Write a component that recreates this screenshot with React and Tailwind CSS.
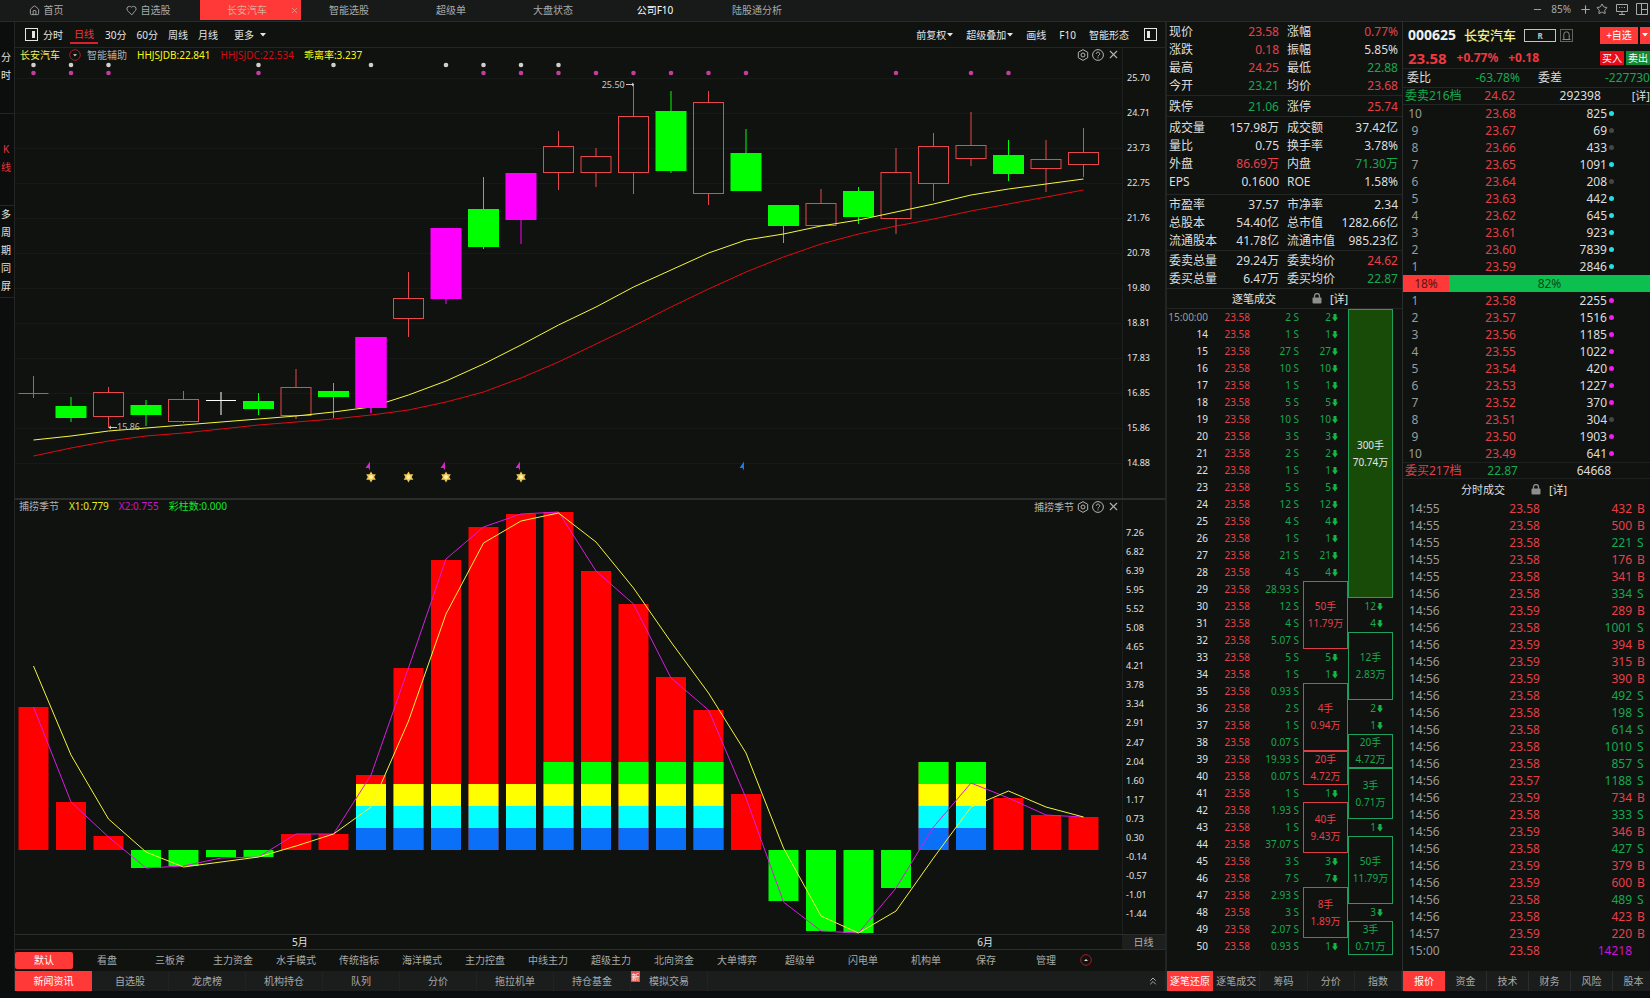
import clsx from 'clsx'
import { LuHeart, LuHouse, LuStar, LuX, LuMinus, LuPlus, LuChevronsUp } from 'react-icons/lu'

const STEP = 37.5
const FIRST_X = 33.5
const cx = (i) => FIRST_X + STEP * i

const TOP_TABS = ['智能选股', '超级单', '大盘状态', '公司F10', '陆股通分析']
const PERIODS = ['分时', '日线', '30分', '60分', '周线', '月线']
const TEMPLATES = ['默认', '看盘', '三板斧', '主力资金', '水手模式', '传统指标', '海洋模式', '主力控盘', '中线主力', '超级主力', '北向资金', '大单博弈', '超级单', '闪电单', '机构单', '保存', '管理']
const NEWS_TABS = ['新闻资讯', '自选股', '龙虎榜', '机构持仓', '队列', '分价', '拖拉机单', '持仓基金', '模拟交易']
const SIDE_TABS = [['分', '时'], ['K', '线'], ['多', '周', '期', '同', '屏']]

// [type, bodyTop, bodyBottom, high, low] in chart units
const CANDLES = [
  ['up', 393, 393, 376, 398], ['down', 406, 418, 397, 422], ['up', 392, 416, 387, 428], ['down', 405, 415, 400, 426],
  ['up', 399, 421, 391, 423], ['flat', 400, 400, 392, 415], ['down', 401, 409, 393, 415], ['up', 387, 415, 369, 419],
  ['down', 391, 397, 383, 418], ['limit', 337, 408, 337, 413], ['up', 298, 318, 272, 337], ['limit', 228, 299, 228, 304],
  ['down', 209, 247, 177, 249], ['limit', 173, 220, 173, 244], ['up', 146, 172, 131, 190], ['up', 156, 172, 148, 187],
  ['up', 116, 172, 84, 194], ['down', 111, 171, 91, 173], ['up', 102, 193, 91, 205], ['down', 153, 191, 129, 191],
  ['down', 205, 226, 205, 243], ['up', 203, 225, 189, 225], ['down', 191, 217, 187, 224], ['up', 172, 218, 148, 234],
  ['up', 146, 183, 133, 201], ['up', 145, 158, 112, 166], ['down', 155, 174, 140, 181], ['up', 159, 168, 140, 192],
  ['up', 152, 164, 128, 177],
]
const CANDLE_COLORS = { up: '#e8484c', down: '#00ff00', flat: '#ffffff', limit: '#ff00ff' }

const MA_B = [440, 436, 431, 428, 425, 422, 419, 416, 412, 407, 395, 381, 364, 345, 325, 307, 287, 270, 253, 240, 234, 226, 220, 212, 204, 195, 189, 184, 179]
const MA_C = [456, 448, 441, 436, 433, 429, 425, 422, 419, 415, 410, 402, 392, 378, 362, 344, 326, 307, 289, 272, 257, 244, 234, 226, 219, 211, 204, 197, 190]

const WHITE_DOTS = [0, 1, 2, 6, 8, 9, 11, 12, 13, 14]
const PINK_DOTS = [0, 1, 2, 6, 12, 13, 14, 15, 16, 17, 18, 19, 23, 25, 26]

const PRICE_AXIS = ['25.70', '24.71', '23.73', '22.75', '21.76', '20.78', '19.80', '18.81', '17.83', '16.85', '15.86', '14.88']
const SEASON_AXIS = ['7.26', '6.82', '6.39', '5.95', '5.52', '5.08', '4.65', '4.21', '3.78', '3.34', '2.91', '2.47', '2.04', '1.60', '1.17', '0.73', '0.30', '-0.14', '-0.57', '-1.01', '-1.44']

const ZERO = 850
const BARS = [707, 802, 836, 868, 866, 857, 857, 834, 834, 775, 668, 560, 527, 514, 512, 571, 604, 677, 710, 794, 901, 931, 933, 888, 762, 762, 798, 815, 817]
const X1 = [666, 755, 819, 852, 867, 862, 857, 846, 834, 807, 721, 614, 543, 521, 513, 542, 588, 642, 693, 753, 848, 916, 933, 911, 858, 807, 791, 807, 817]
const X2 = [707, 802, 837, 868, 866, 858, 857, 834, 834, 775, 668, 559, 527, 514, 512, 571, 604, 678, 710, 798, 902, 931, 933, 888, 827, 783, 798, 815, 817]

const QUOTE_GROUPS = [
  { cls: 'pt-px', rows: [
    ['现价', '23.58', 'r', '涨幅', '0.77%', 'r'],
    ['涨跌', '0.18', 'r', '振幅', '5.85%', 'w'],
    ['最高', '24.25', 'r', '最低', '22.88', 'g'],
    ['今开', '23.21', 'g', '均价', '23.68', 'r'],
  ] },
  { cls: 'pt-0.5', rows: [['跌停', '21.06', 'g', '涨停', '25.74', 'r']] },
  { cls: 'pt-0.5 pb-[3px]', rows: [
    ['成交量', '157.98万', 'w', '成交额', '37.42亿', 'w'],
    ['量比', '0.75', 'w', '换手率', '3.78%', 'w'],
    ['外盘', '86.69万', 'r', '内盘', '71.30万', 'g'],
    ['EPS', '0.1600', 'w', 'ROE', '1.58%', 'w'],
  ] },
  { cls: 'pt-px', rows: [
    ['市盈率', '37.57', 'w', '市净率', '2.34', 'w'],
    ['总股本', '54.40亿', 'w', '总市值', '1282.66亿', 'w'],
    ['流通股本', '41.78亿', 'w', '流通市值', '985.23亿', 'w'],
  ] },
  { cls: 'pt-px', rows: [
    ['委卖总量', '29.24万', 'w', '委卖均价', '24.62', 'r'],
    ['委买总量', '6.47万', 'w', '委买均价', '22.87', 'g'],
  ] },
]
const TONE = { r: 'text-[#e8404a]', g: 'text-[#18a852]', w: 'text-[#dedede]', m: 'text-[#c814d8]' }

const TICK_VOLS = ['2', '1', '27', '10', '1', '5', '10', '3', '2', '1', '5', '12', '4', '1', '21', '4', '28.93', '12', '4', '5.07', '5', '1', '0.93', '2', '1', '0.07', '19.93', '0.07', '1', '1.93', '1', '37.07', '3', '7', '2.93', '3', '2.07', '0.93']
// start row -> [rows, lots, amount]
const BUY_BLOCKS = { 16: [4, '50手', '11.79万'], 22: [4, '4手', '0.94万'], 26: [2, '20手', '4.72万'], 29: [3, '40手', '9.43万'], 34: [3, '8手', '1.89万'] }
const SELL_BLOCKS = { 0: [17, '300手', '70.74万'], 19: [4, '12手', '2.83万'], 25: [2, '20手', '4.72万'], 27: [3, '3手', '0.71万'], 31: [4, '50手', '11.79万'], 36: [2, '3手', '0.71万'] }
const SELL_SINGLES = { 17: '12', 18: '4', 23: '2', 24: '1', 30: '1', 35: '3' }
const BUY_SINGLES = { 37: '1' }

const ASKS = [
  [10, '23.68', 825, 'c'], [9, '23.67', 69, 'd'], [8, '23.66', 433, 'd'], [7, '23.65', 1091, 'c'], [6, '23.64', 208, 'd'],
  [5, '23.63', 442, 'c'], [4, '23.62', 645, 'c'], [3, '23.61', 923, 'c'], [2, '23.60', 7839, 'c'], [1, '23.59', 2846, 'c'],
]
const BIDS = [
  [1, '23.58', 2255, 'm'], [2, '23.57', 1516, 'm'], [3, '23.56', 1185, 'm'], [4, '23.55', 1022, 'm'], [5, '23.54', 420, 'm'],
  [6, '23.53', 1227, 'm'], [7, '23.52', 370, 'm'], [8, '23.51', 304, 'd'], [9, '23.50', 1903, 'm'], [10, '23.49', 641, 'm'],
]
const DOT = { c: 'bg-[#22dfe4]', d: 'bg-[#444746]', m: 'bg-[#ee1cee]' }

const TRADES = [
  ['14:55', '23.58', 432, 'B'], ['14:55', '23.58', 500, 'B'], ['14:55', '23.58', 221, 'S'], ['14:55', '23.58', 176, 'B'],
  ['14:55', '23.58', 341, 'B'], ['14:56', '23.58', 334, 'S'], ['14:56', '23.59', 289, 'B'], ['14:56', '23.58', 1001, 'S'],
  ['14:56', '23.59', 394, 'B'], ['14:56', '23.59', 315, 'B'], ['14:56', '23.59', 390, 'B'], ['14:56', '23.58', 492, 'S'],
  ['14:56', '23.58', 198, 'S'], ['14:56', '23.58', 614, 'S'], ['14:56', '23.58', 1010, 'S'], ['14:56', '23.58', 857, 'S'],
  ['14:56', '23.57', 1188, 'S'], ['14:56', '23.59', 734, 'B'], ['14:56', '23.58', 333, 'S'], ['14:56', '23.59', 346, 'B'],
  ['14:56', '23.58', 427, 'S'], ['14:56', '23.59', 379, 'B'], ['14:56', '23.59', 600, 'B'], ['14:56', '23.58', 489, 'S'],
  ['14:56', '23.58', 423, 'B'], ['14:57', '23.59', 220, 'B'], ['15:00', '23.58', 14218, ''],
]

const points = (ys) => ys.map((y, i) => `${cx(i)},${y}`).join(' ')

const Caret = () => (
  <svg viewBox="0 0 6 4" className="w-[6px] h-[4px]"><path d="M0 0h6L3 3.5z" fill="currentColor" /></svg>
)

const PanelIcon = ({ right }) => (
  <svg viewBox="0 0 13 13" className="size-[13px]">
    <rect x="0.5" y="0.5" width="12" height="12" fill="none" stroke="#e6e6e6" />
    <rect x={right ? 7 : 3} y="3" width="3" height="7" fill="#e6e6e6" />
  </svg>
)

const ScreenIcon = () => (
  <svg viewBox="0 0 12 12" className="size-[12px]" fill="none" stroke="currentColor">
    <path d="M.5 1.500h11v7H.5zM6 8.500v2.500M3 11.500h6M3 4.500h1m1.500 0h1m1.500 0h1" />
  </svg>
)

const LayoutIcon = () => (
  <svg viewBox="0 0 12 12" className="size-[12px]" fill="none" stroke="currentColor">
    <path d="M.5.5h11v11H.5zM5.500.5v11M5.500 6.500h6" />
  </svg>
)

const Lock = () => (
  <svg viewBox="0 0 10 11" className="w-[10px] h-[11px]">
    <rect x="0.5" y="4.5" width="9" height="6" rx="1" fill="#8d8f8e" />
    <path d="M2.5 5V3a2.5 2.5 0 0 1 5 0v2" fill="none" stroke="#8d8f8e" strokeWidth="1.3" />
  </svg>
)

const DownArrow = () => (
  <svg viewBox="0 0 6 8" className="w-[6px] h-[8px]"><path d="M1.5 0h3v3.600H6L3 7.600 0 3.600h1.500z" fill="#10b846" /></svg>
)

const RingCaret = ({ up }) => (
  <svg viewBox="0 0 12 12" className="size-[12px]">
    <circle cx="6" cy="6" r="5.3" fill="none" stroke="#a81c26" />
    <path d={up ? 'M4 7h4L6 5z' : 'M4 5.3h4l-2 2z'} fill="#ddd" />
  </svg>
)

const ChartTools = ({ title }) => (
  <div className="absolute top-0 right-0.5 h-[13px] flex items-center gap-[3px] text-[#b4b4b4]">
    {title && <span>{title}</span>}
    <button aria-label="设置">
      <svg viewBox="0 0 12 12" className="size-[12px]" fill="none" stroke="currentColor">
        <path d="M6 .6l4.7 2.7v5.4L6 11.4 1.3 8.700V3.300z" />
        <circle cx="6" cy="6" r="2" />
      </svg>
    </button>
    <button aria-label="帮助">
      <svg viewBox="0 0 12 12" className="size-[12px]" fill="none" stroke="currentColor">
        <circle cx="6" cy="6" r="5.4" />
        <path d="M4.300 4.800a1.700 1.700 0 1 1 2.600 1.400c-.6.4-.9.6-.9 1.300M6 8.400v1" />
      </svg>
    </button>
    <button aria-label="关闭"><LuX size={13} /></button>
  </div>
)

const Candle = ({ i, data: [type, top, bottom, high, low] }) => {
  const x = cx(i)
  const color = CANDLE_COLORS[type]
  if (top === bottom) {
    return <path d={`M${x - 15} ${top + 0.5}h30M${x} ${high}V${low}`} stroke={color} />
  }
  if (type === 'up') {
    return (
      <g stroke={color} fill="none">
        <rect x={x - 15} y={top + 0.5} width="30" height={bottom - top} />
        <path d={`M${x} ${high}V${top}M${x} ${bottom}V${low}`} />
      </g>
    )
  }
  return (
    <g>
      <path d={`M${x} ${high}V${low}`} stroke={color} />
      <rect x={x - 15.5} y={top} width="31" height={bottom - top} fill={color} />
    </g>
  )
}

const Flag = ({ x, color }) => <path d={`M${x} 461.500v9l-1.500-2.500h-3z`} fill={color} />

const SixStar = ({ x }) => (
  <g transform={`translate(${x} 477)`}>
    <path d="M0-5.500l1.600 2.700h3.200L3.200 0l1.600 2.800H1.600L0 5.500l-1.600-2.700h-3.200L-3.200 0l-1.600-2.800h3.200z" fill="#f0c850" />
    <circle r="2" fill="#fff0a0" />
  </g>
)

const PriceChart = () => (
  <section className="relative flex flex-1">
    <div className="relative flex flex-1">
      <svg viewBox="15 48 1107 450" preserveAspectRatio="none" className="block w-full">
        {PRICE_AXIS.map((p, i) => <path key={p} d={`M15 ${78.5 + i * 35}H1122`} stroke="#161916" />)}
        {WHITE_DOTS.map(i => <circle key={i} cx={cx(i)} cy="65" r="2.300" fill="#cfcfcf" />)}
        {PINK_DOTS.map(i => <circle key={i} cx={cx(i)} cy="73" r="2.300" fill="#c43c9c" />)}
        {CANDLES.map((c, i) => <Candle key={i} i={i} data={c} />)}
        <polyline points={points(MA_C)} fill="none" stroke="#e00a14" />
        <polyline points={points(MA_B)} fill="none" stroke="#f8f83c" />
        <Candle i={9} data={CANDLES[9]} />
        <path d="M626 84.500h8m-2-1.500l2 1.500-2 1.500M109 427.500h8m-6-1.500l-2 1.500 2 1.500" stroke="#c8c8c8" fill="none" />
        {[9, 11, 13].map(i => <Flag key={i} x={cx(i) - 1} color="#d428c8" />)}
        <Flag x={cx(19) - 2} color="#1a78f0" />
        {[9, 10, 11, 13].map(i => <SixStar key={i} x={cx(i)} />)}
      </svg>
      <div className="absolute top-0 left-[5px] h-[14px] flex items-center gap-2.5 whitespace-nowrap">
        <span className="text-[#f0f060]">长安汽车</span>
        <button aria-label="切换" className="-ml-px"><RingCaret /></button>
        <span className="-ml-1 text-[#b0b0b0]">智能辅助</span>
        <span className="text-[#f8f810]">HHJSJDB:22.841</span>
        <span className="text-[#d00c14]">HHJSJDC:22.534</span>
        <span className="text-[#f8f810]">乖离率:3.237</span>
      </div>
      <ChartTools />
      <span className="absolute left-[53%] top-[31px] text-[9px] leading-3 text-[#c8c8c8]">25.50</span>
      <span className="absolute left-[102px] top-[373px] text-[9px] leading-3 text-[#b8b8b8]">15.86</span>
    </div>
    <div className="w-[43px] shrink-0 border-l border-[#1c1f1d] pl-1 pt-3 pb-[18px] flex flex-col text-[9px] text-[#e2e2e2]">
      {PRICE_AXIS.map(p => <span key={p} className="flex-1 flex items-center">{p}</span>)}
    </div>
  </section>
)

const SeasonBar = ({ i, y }) => {
  const x = cx(i) - 15
  const stacked = (i >= 9 && i <= 18) || i === 24 || i === 25
  const hasGreen = i >= 14
  if (y > ZERO) return <rect x={x} y={ZERO} width="30" height={y - ZERO} fill="#00ff00" />
  return (
    <g>
      <rect x={x} y={y} width="30" height={ZERO - y} fill="#ff0000" />
      {stacked && (
        <>
          {hasGreen && <rect x={x} y="762" width="30" height="22" fill="#00ff00" />}
          <rect x={x} y="784" width="30" height="22" fill="#ffff00" />
          <rect x={x} y="806" width="30" height="22" fill="#00ffff" />
          <rect x={x} y="828" width="30" height="22" fill="#0a70f8" />
        </>
      )}
    </g>
  )
}

const SeasonChart = () => (
  <section className="relative flex flex-1 border-t-2 border-[#2a2d2b]">
    <div className="relative flex flex-1">
      <svg viewBox="15 500 1107 434" preserveAspectRatio="none" className="block w-full">
        {BARS.map((y, i) => <SeasonBar key={i} i={i} y={y} />)}
        <polyline points={points(X2)} fill="none" stroke="#d81ce0" />
        <polyline points={points(X1)} fill="none" stroke="#f4f43c" />
      </svg>
      <div className="absolute top-0 left-1 h-[12px] flex items-center gap-2.5 whitespace-nowrap">
        <span className="text-[#b0b0b0]">捕捞季节</span>
        <span className="text-[#e8f020]">X1:0.779</span>
        <span className="text-[#c818cc]">X2:0.755</span>
        <span className="text-[#10e828]">彩柱数:0.000</span>
      </div>
      <ChartTools title="捕捞季节" />
    </div>
    <div className="w-[43px] shrink-0 border-l border-[#1c1f1d] pl-[3px] pt-[23px] pb-[10px] flex flex-col text-[9px] text-[#e2e2e2]">
      {SEASON_AXIS.map(p => <span key={p} className="flex-1 flex items-center">{p}</span>)}
    </div>
  </section>
)

const Block = ({ block: [rows, lots, amount], sell, filled }) => (
  <td
    rowSpan={rows}
    className={clsx(
      'p-0 text-center outline -outline-offset-1',
      sell ? 'outline-[#20a060] text-[#18a852]' : 'outline-[#e03c44] text-[#e8404a]',
      filled && 'bg-[#184a08] text-[#e4e4e4]!',
    )}
  >
    {lots}<br />{amount}
  </td>
)

const inBlock = (blocks, row) => Object.entries(blocks).some(([s, [n]]) => row > Number(s) && row < Number(s) + n)

const Single = ({ value }) => (
  <td className="p-0 pr-2.5 text-right text-[#18a852]">
    <span className="inline-flex items-center gap-px">{value}<DownArrow /></span>
  </td>
)

const Ticks = () => (
  <table className="w-[226px] table-fixed border-separate border-spacing-0 text-[10px] leading-[17px]">
    <colgroup>
      <col className="w-[41px]" /><col className="w-[42px]" /><col className="w-[53px]" /><col className="w-[45px]" /><col className="w-[45px]" />
    </colgroup>
    <tbody>
      {TICK_VOLS.map((vol, i) => (
        <tr key={i} className="h-[17px]">
          <td className={clsx('p-0 text-right', i ? 'text-[#e2e2e2]' : 'text-[#9a9c9b]')}>{i ? i + 13 : '15:00:00'}</td>
          <td className="p-0 text-right text-[#e8404a]">23.58</td>
          <td className="p-0 pr-1 text-right text-[#18a852]">{vol} S</td>
          {BUY_BLOCKS[i] ? <Block block={BUY_BLOCKS[i]} /> : !inBlock(BUY_BLOCKS, i) && <Single value={BUY_SINGLES[i] || vol} />}
          {SELL_BLOCKS[i] ? <Block block={SELL_BLOCKS[i]} sell filled={i === 0} /> : !inBlock(SELL_BLOCKS, i) && <Single value={SELL_SINGLES[i]} />}
        </tr>
      ))}
    </tbody>
  </table>
)

const QuotePanel = () => (
  <section className="w-[237px] shrink-0 border-l-2 border-[#222523] flex flex-col">
    {QUOTE_GROUPS.map((g, i) => (
      <dl key={i} className={clsx('border-b border-[#232624] text-xs text-[#dedede]', g.cls)}>
        {g.rows.map(([a, av, at, b, bv, bt]) => (
          <div key={a} className="flex h-[18px] pl-0.5 pr-1 leading-[18px] whitespace-nowrap">
            <div className="w-[110px] flex justify-between"><dt>{a}</dt><dd className={TONE[at]}>{av}</dd></div>
            <div className="flex-1 ml-2 flex justify-between"><dt>{b}</dt><dd className={TONE[bt]}>{bv}</dd></div>
          </div>
        ))}
      </dl>
    ))}
    <div className="h-[20px] border-b border-[#232624] flex items-center pl-[65px] text-[11px] text-[#e2e2e2]">
      <h2>逐笔成交</h2>
      <span className="ml-9"><Lock /></span>
      <a href="#ticks" className="ml-2">[详]</a>
    </div>
    <Ticks />
    <nav className="mt-auto h-[20px] flex bg-[#1a1d1c] text-[#a8aaa9]">
      {['逐笔还原', '逐笔成交', '筹码', '分价', '指数'].map((t, i) => (
        <button key={t} className={clsx('flex-1 whitespace-nowrap', i ? 'border-r border-[#232625]' : 'bg-[#ff3838] text-white')}>{t}</button>
      ))}
    </nav>
  </section>
)

const Book = ({ rows }) => (
  <table className="w-full table-fixed border-separate border-spacing-0 text-xs leading-[17px]">
    <colgroup><col className="w-[24px]" /><col className="w-[89px]" /><col className="w-[91px]" /><col /></colgroup>
    <tbody>
      {rows.map(([level, price, vol, dot]) => (
        <tr key={level} className="h-[17px]">
          <td className="p-0 text-center text-[#9a9c9b]">{level}</td>
          <td className="p-0 text-right text-[#e0404a]">{price}</td>
          <td className="p-0 text-right text-[#dedede]">{vol}</td>
          <td className="p-0 pl-0.5"><span className={clsx('block size-[5px] rounded-full', DOT[dot])} /></td>
        </tr>
      ))}
    </tbody>
  </table>
)

const OrderPanel = () => (
  <section className="w-[248px] shrink-0 border-l border-[#2a2d2c] flex flex-col overflow-hidden whitespace-nowrap">
    <div className="h-[26px] flex items-center pl-[5px]">
      <b className="text-sm text-[#f0f0f0]">000625</b>
      <b className="ml-2 text-[13px] font-medium text-[#f0f08c]">长安汽车</b>
      <span className="ml-2 w-[32px] h-[13px] border border-[#c4c4c4] text-[8px] leading-[11px] font-bold text-center text-[#c4c4c4]">R</span>
      <button aria-label="提醒" className="ml-1 size-[13px] border border-[#626463]">
        <svg viewBox="0 0 11 11" fill="none" stroke="#8a8c8b"><path d="M1.500 9.500h8M2.800 9.500v-5a2.700 2.700 0 0 1 5.400 0v5" /></svg>
      </button>
      <button className="ml-auto w-[38px] h-[17px] shrink-0 bg-[#ff3838] text-white">+自选</button>
      <button aria-label="更多分组" className="ml-0.5 w-[10px] h-[17px] shrink-0 bg-[#ff3838] text-white flex items-center justify-center"><Caret /></button>
    </div>
    <div className="h-[21px] border-b border-[#232624] flex items-center pl-[5px] font-bold text-[#f03840]">
      <span className="text-[15px]">23.58</span>
      <span className="ml-2.5 text-xs">+0.77%</span>
      <span className="ml-2.5 text-xs">+0.18</span>
      <button className="ml-auto w-[24px] h-[14px] bg-[#e80c18] font-normal leading-[14px] text-white">买入</button>
      <button className="ml-0.5 w-[24px] h-[14px] bg-[#128a34] font-normal leading-[14px] text-white">卖出</button>
    </div>
    <div className="h-[19px] border-b border-[#232624] flex items-center pl-1 text-xs text-[#dedede]">
      <span>委比</span>
      <span className="w-[89px] text-right text-[#18a852]">-63.78%</span>
      <span className="ml-[18px]">委差</span>
      <span className="ml-[43px] text-[#18a852]">-227730</span>
    </div>
    <div className="h-[17px] border-b border-[#232624] flex items-center pl-0.5 text-xs text-[#dedede]">
      <span className="w-[60px] text-[#18a852]">委卖216档</span>
      <span className="w-[53px] text-right text-[#e0404a]">24.62</span>
      <span className="w-[88px] text-right">292398</span>
      <a href="#asks" className="ml-[31px] text-[11px]">[详]</a>
    </div>
    <Book rows={ASKS} />
    <div className="h-[17px] flex text-xs leading-[17px] text-center">
      <span className="w-[46px] bg-[#ff3838] text-[#5c1410]">18%</span>
      <span className="flex-1 bg-[#0cc050] text-[#0c4818]">82%</span>
    </div>
    <Book rows={BIDS} />
    <div className="h-[17px] border-y border-[#1d201e] flex items-center pl-0.5 text-xs text-[#dedede]">
      <span className="w-[60px] text-[#e0404a]">委买217档</span>
      <span className="w-[53px] text-right text-[#18a852]">22.87</span>
      <span className="w-[93px] text-right">64668</span>
    </div>
    <div className="h-[21px] flex items-center pl-[58px] text-[11px] text-[#dedede]">
      <h2>分时成交</h2>
      <span className="ml-[26px]"><Lock /></span>
      <a href="#trades" className="ml-2">[详]</a>
    </div>
    <table className="w-full table-fixed border-separate border-spacing-0 text-xs leading-[17px]">
      <colgroup><col className="w-[60px]" /><col className="w-[77px]" /><col className="w-[92px]" /><col /></colgroup>
      <tbody>
        {TRADES.map(([time, price, vol, side], i) => {
          const tone = { B: TONE.r, S: TONE.g }[side] || TONE.m
          return (
            <tr key={i} className="h-[17px]">
              <td className="p-0 pl-1.5 text-[#9a9c9b]">{time}</td>
              <td className="p-0 text-right text-[#e0404a]">{price}</td>
              <td className={clsx('p-0 text-right', tone)}>{vol}</td>
              <td className={clsx('p-0 pl-[5px]', tone)}>{side}</td>
            </tr>
          )
        })}
      </tbody>
    </table>
    <nav className="mt-auto h-[20px] flex bg-[#1a1d1c] text-[#a8aaa9]">
      {['报价', '资金', '技术', '财务', '风险', '股本'].map((t, i) => (
        <button key={t} className={clsx('w-[42px] shrink-0', i ? 'border-r border-[#2a2d2c]' : 'bg-[#ff3838] text-white')}>{t}</button>
      ))}
    </nav>
  </section>
)

const TopBar = () => (
  <header className="h-[22px] flex bg-[#171a19] border-b border-[#282b2a] text-[#a8aaa9]">
    <nav className="flex h-[20px]">
      <button className="w-[92px] flex items-center justify-center gap-1"><LuHouse size={11} />首页</button>
      <button className="w-[108px] flex items-center justify-center gap-1 pl-1"><LuHeart size={11} />自选股</button>
      <div className="w-[101px] bg-[#ff3838] flex items-center text-[#e0a898]">
        <button className="flex-1 pl-1">长安汽车</button>
        <button aria-label="关闭" className="pr-0.5"><LuX size={9} /></button>
      </div>
      {TOP_TABS.map(t => (
        <button key={t} className={clsx('w-[102px] pr-1.5', t === '公司F10' && 'text-white')}>{t}</button>
      ))}
    </nav>
    <div className="ml-auto pr-0.5 h-[18px] flex items-center gap-2">
      <button aria-label="缩小"><LuMinus size={11} /></button>
      <span>85%</span>
      <button aria-label="放大"><LuPlus size={13} /></button>
      <button aria-label="收藏" className="-ml-1"><LuStar size={12} /></button>
      <button aria-label="显示"><ScreenIcon /></button>
      <button aria-label="布局"><LayoutIcon /></button>
    </div>
  </header>
)

const Toolbar = () => (
  <div className="h-[26px] flex items-center border-b border-[#232624] pl-2.5 pr-2 text-[#e6e6e6] whitespace-nowrap">
    <button aria-label="侧栏"><PanelIcon right /></button>
    {PERIODS.map(p => (
      <button
        key={p}
        className={clsx(
          p === '日线' ? 'mx-0.5 px-1 text-[#f03840] border-b-2 border-[#d8202c]' : 'px-[5px]',
        )}
      >
        {p}
      </button>
    ))}
    <button className="ml-[11px] flex items-center gap-1.5">更多<Caret /></button>
    <div className="ml-auto flex items-center gap-[13px]">
      <button className="flex items-center gap-px">前复权<Caret /></button>
      <button className="flex items-center gap-px">超级叠加<Caret /></button>
      <button>画线</button>
      <button>F10</button>
      <button>智能形态</button>
      <button aria-label="右侧栏" className="ml-0.5"><PanelIcon /></button>
    </div>
  </div>
)

const App = () => (
  <div className="min-h-screen flex flex-col bg-[#0f120f] text-[10px] leading-4 font-['Noto_Sans','Noto_Sans_CJK_SC',sans-serif]">
    <TopBar />
    <div className="flex flex-1">
      <nav className="w-[15px] shrink-0 border-r border-[#232624] bg-[#0c0e0d]">
        {SIDE_TABS.map((chars, i) => (
          <button
            key={i}
            className={clsx(
              'w-full h-[92px] pr-0.5 pb-1 flex flex-col items-center justify-center border-b border-[#232624] leading-[18px]',
              i === 1 ? 'text-[#e83840]' : 'text-[#e2e2e2]',
            )}
          >
            {chars.map(c => <span key={c}>{c}</span>)}
          </button>
        ))}
      </nav>
      <main className="flex-1 min-w-0 flex flex-col">
        <Toolbar />
        <PriceChart />
        <SeasonChart />
        <div className="h-[16px] flex border-y border-[#2a2d2b] leading-[14px] text-[#e2e2e2]">
          <div className="flex-1 flex">
            <span className="w-[62%] pl-[277px]">5月</span>
            <span className="flex-1 pl-[276px]">6月</span>
          </div>
          <button className="w-[43px] bg-[#1c1f1e] text-[#b0b0b0]">日线</button>
        </div>
        <nav className="h-[21px] pb-px flex items-center gap-[5px] text-[#a8aaa9] whitespace-nowrap">
          {TEMPLATES.map((t, i) => (
            <button key={t} className={clsx('h-[17px]', t === '保存' ? 'w-[52px]' : 'w-[58px]', i === 0 && 'bg-[#ff3838] text-white rounded-xs')}>{t}</button>
          ))}
          <button aria-label="展开"><RingCaret up /></button>
        </nav>
        <nav className="h-[20px] flex items-center bg-[#1a1d1c] text-[#a8aaa9] whitespace-nowrap">
          {NEWS_TABS.map((t, i) => (
            <button key={t} className={clsx('relative w-[77px] h-full', i === 0 ? 'bg-[#ff3838] text-white' : 'border-r border-[#202322]')}>
              {t}
              {t === '模拟交易' && <span className="absolute left-0 top-0 w-[9px] h-[11px] bg-[#e84850] text-[8px] leading-[11px] text-white">新</span>}
            </button>
          ))}
          <button aria-label="展开" className="ml-auto pr-1.5"><LuChevronsUp size={12} /></button>
        </nav>
      </main>
      <QuotePanel />
      <OrderPanel />
    </div>
    <footer className="h-[7px] bg-[#0b0e11]" />
  </div>
)

export default App
